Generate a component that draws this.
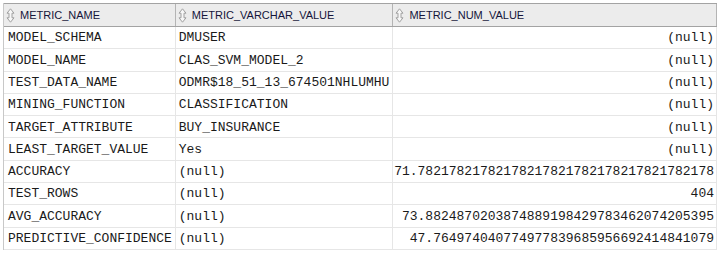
import React from "react";

const rows = [
  ["MODEL_SCHEMA", "DMUSER", "(null)"],
  ["MODEL_NAME", "CLAS_SVM_MODEL_2", "(null)"],
  ["TEST_DATA_NAME", "ODMR$18_51_13_674501NHLUMHU", "(null)"],
  ["MINING_FUNCTION", "CLASSIFICATION", "(null)"],
  ["TARGET_ATTRIBUTE", "BUY_INSURANCE", "(null)"],
  ["LEAST_TARGET_VALUE", "Yes", "(null)"],
  ["ACCURACY", "(null)", "71.78217821782178217821782178217821782178"],
  ["TEST_ROWS", "(null)", "404"],
  ["AVG_ACCURACY", "(null)", "73.8824870203874889198429783462074205395"],
  ["PREDICTIVE_CONFIDENCE", "(null)", "47.764974040774977839685956692414841079"],
];

const classes = {
  page: "w-[721px] h-[257px] bg-white pt-[3px] pl-[3px]",
  table: "w-[714px] border-l border-[#c8c8c8]",
  header:
    "flex h-[24px] bg-[#ececec] border-t border-b border-[#a3a3a3] font-['Liberation_Sans',Arial,sans-serif] text-[11px] text-[#14143a]",
  headCell: "flex items-center gap-[5px] pl-[2px] border-r border-[#b4b4b4]",
  row: "flex h-[22.3px] border-b border-[#e6e6e6] font-['Liberation_Mono','Courier_New',monospace] text-[13px] text-[#1a1a1a]",
  cell: "flex items-center pt-[1px] border-r border-[#e6e6e6] whitespace-nowrap overflow-hidden",
};

const widths = ["w-[172px]", "w-[218px]", "w-[324px]"];

const SortIcon = () => (
  <svg width="9" height="15" viewBox="0 0 9 15">
    <path
      d="M4.5 0.8 L8 5.2 L6 5.2 L6 9.8 L8 9.8 L4.5 14.2 L1 9.8 L3 9.8 L3 5.2 L1 5.2 Z"
      fill="#f7f7f7"
      stroke="#a0a0a0"
      strokeWidth="1"
      strokeLinejoin="round"
    />
  </svg>
);

const App = () => {
  const heads = ["METRIC_NAME", "METRIC_VARCHAR_VALUE", "METRIC_NUM_VALUE"];
  return (
    <div className={classes.page}>
      <div className={classes.table}>
        <div className={classes.header}>
          {heads.map((h, i) => (
            <div key={h} className={`${classes.headCell} ${widths[i]}`}>
              <SortIcon />
              <span>{h}</span>
            </div>
          ))}
        </div>
        {rows.map((r) => (
          <div key={r[0]} className={classes.row}>
            <div className={`${classes.cell} ${widths[0]} pl-[4px]`}>{r[0]}</div>
            <div className={`${classes.cell} ${widths[1]} pl-[3px]`}>{r[1]}</div>
            <div className={`${classes.cell} ${widths[2]} justify-end pr-[2px]`}>{r[2]}</div>
          </div>
        ))}
      </div>
    </div>
  );
};

export default App;
